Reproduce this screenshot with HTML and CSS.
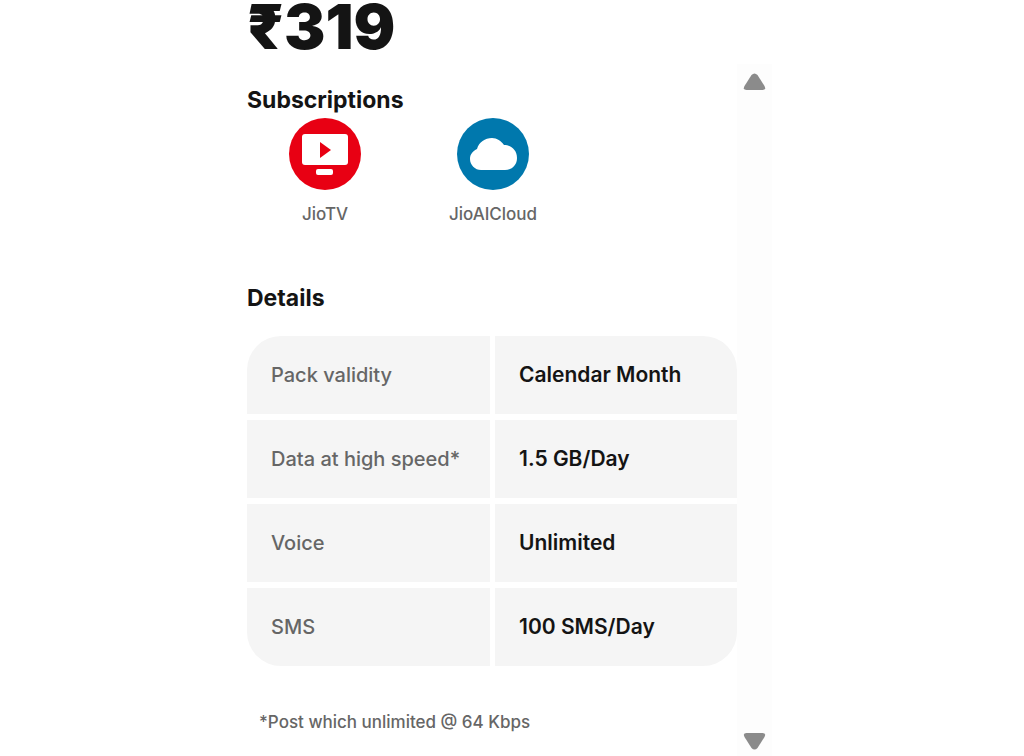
FILE: index.html
```html
<!DOCTYPE html>
<html lang="en">
<head>
    <meta charset="UTF-8">
    <meta name="viewport" content="width=device-width, initial-scale=1.0">
    <title>Plan details</title>
    <link rel="stylesheet" href="styles.css">
</head>
<body>
    <main class="plan">
        <h1 class="price">₹319</h1>
        <div class="scroll-area">
            <div class="content">
                <h2>Subscriptions</h2>
                <ul class="apps">
                    <li class="app">
                        <svg class="app-icon" viewBox="0 0 72 72" aria-hidden="true">
                            <circle cx="36" cy="36" r="36" fill="#e80013"/>
                            <rect x="13" y="16" width="46" height="31" rx="3" fill="#fff"/>
                            <path d="M31 24v16l11-8z" fill="#e80013"/>
                            <rect x="27" y="51" width="17" height="6" rx="2" fill="#fff"/>
                        </svg>
                        <span>JioTV</span>
                    </li>
                    <li class="app">
                        <svg class="app-icon" viewBox="0 0 72 72" aria-hidden="true">
                            <circle cx="36" cy="36" r="36" fill="#0078ad"/>
                            <path d="M24 52C18 52 13 47 13 41C13 36 16 33 20 31C22 24 28 20 35 20C40 20 44 23 47 27C54 27 60 32 60 40C60 47 55 52 48 52Z" fill="#fff"/>
                        </svg>
                        <span>JioAICloud</span>
                    </li>
                </ul>
                <h2>Details</h2>
                <table class="details">
                    <tr>
                        <th scope="row">Pack validity</th>
                        <td>Calendar Month</td>
                    </tr>
                    <tr>
                        <th scope="row">Data at high speed*</th>
                        <td>1.5 GB/Day</td>
                    </tr>
                    <tr>
                        <th scope="row">Voice</th>
                        <td>Unlimited</td>
                    </tr>
                    <tr>
                        <th scope="row">SMS</th>
                        <td>100 SMS/Day</td>
                    </tr>
                </table>
                <p class="note">*Post which unlimited @ 64 Kbps</p>
            </div>
            <div class="scrollbar">
                <button type="button" aria-label="Scroll up">
                    <svg viewBox="0 0 22 17" aria-hidden="true"><path d="M8 2Q11 -1 14 2L21 13Q23 17 19 17H3Q-1 17 1 13Z"/></svg>
                </button>
                <button type="button" aria-label="Scroll down">
                    <svg viewBox="0 0 22 17" aria-hidden="true"><path d="M8 15Q11 18 14 15L21 4Q23 0 19 0H3Q-1 0 1 4Z"/></svg>
                </button>
            </div>
        </div>
    </main>
</body>
</html>
```
FILE: styles.css
```css
* {
    box-sizing: border-box;
}
body {
    font-family: Inter, "Liberation Sans", sans-serif;
    background: #fff;
    color: #141414;
    margin: 0;
}
.plan {
    display: flex;
    flex-direction: column;
    min-height: 100vh;
    padding: 0 252px 0 247px;
}
.price {
    margin: 0;
    height: 64px;
    font-size: 62px;
    line-height: 54px;
    font-weight: 900;
}
.scroll-area {
    display: flex;
    flex: 1;
}
.content {
    flex: 1;
    padding-top: 20px;
}
h2 {
    margin: 0;
    font-size: 23px;
    line-height: 32px;
    font-weight: 700;
}
.apps {
    display: flex;
    list-style: none;
    margin: 2px 0 56px -6px;
    padding: 0;
}
.app {
    display: flex;
    flex-direction: column;
    align-items: center;
    gap: 12px;
    width: 168px;
    color: #666;
    font-size: 17px;
    line-height: 24px;
    font-weight: 500;
}
.app-icon {
    width: 72px;
    height: 72px;
}
.details {
    width: 100%;
    margin-top: 22px;
    table-layout: fixed;
    border-spacing: 0;
    border-radius: 34px;
    overflow: hidden;
    line-height: 28px;
}
.details th,
.details td {
    height: 78px;
    padding: 0 24px;
    background: #f5f5f5;
    text-align: left;
}
.details th {
    color: #666;
    font-size: 20px;
    font-weight: 500;
    border-right: 2px solid #fff;
}
.details td {
    font-size: 21px;
    font-weight: 600;
    border-left: 3px solid #fff;
}
.details tr + tr th,
.details tr + tr td {
    height: 84px;
    border-top: 6px solid #fff;
}
.note {
    margin: 44px 12px 0;
    color: #666;
    font-size: 17px;
    line-height: 24px;
    font-weight: 500;
}
.scrollbar {
    display: flex;
    flex-direction: column;
    justify-content: space-between;
    width: 35px;
    padding: 9px 6px 6px;
    background: #fdfdfd;
}
.scrollbar button {
    display: flex;
    padding: 0;
    border: none;
    background: none;
    cursor: pointer;
}
.scrollbar svg {
    width: 23px;
    height: 17px;
    fill: #8b8b8b;
}
```
